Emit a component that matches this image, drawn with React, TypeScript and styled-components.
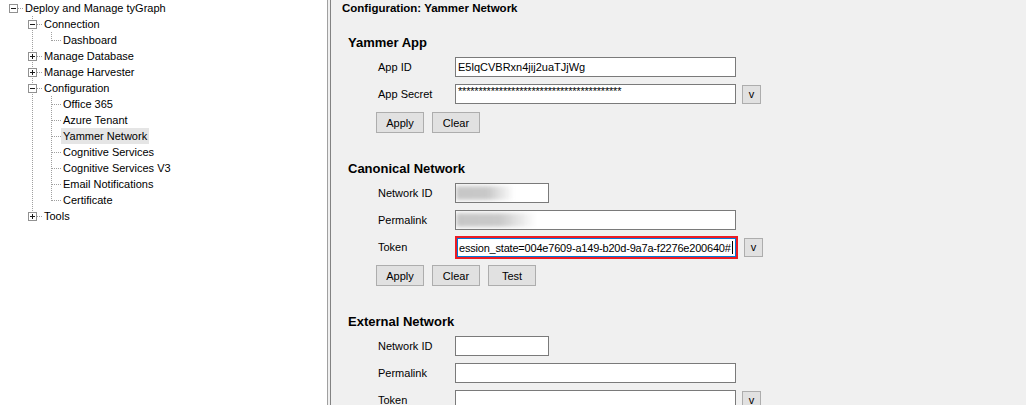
import React from 'react';
import styled, { createGlobalStyle } from 'styled-components';

const GlobalStyle = createGlobalStyle`
  html, body { margin: 0; padding: 0; overflow: hidden; background: #f0f0f0; }
  body { font-family: "Liberation Sans", Arial, sans-serif; font-size: 11px; color: #000; }
  * { box-sizing: border-box; }
`;

const Window = styled.div`
  display: flex;
  width: 1026px;
  height: 405px;
  overflow: hidden;
`;

const TreePanel = styled.div`
  width: 327px;
  flex: none;
  background: #fff;
  display: flex;
  flex-direction: column;
`;

const Splitter = styled.div`
  width: 4px;
  flex: none;
  background: #f0f0f0;
  border-left: 1px solid #a0a0a0;
  border-right: 1px solid #828282;
`;

const Content = styled.div`
  flex: 1;
  background: #f0f0f0;
  padding-left: 11px;
  display: flex;
  flex-direction: column;
`;

const TreeRowBox = styled.div`
  display: flex;
  align-items: center;
  height: 16px;
  white-space: nowrap;
`;

const NodeLabel = styled.span<{ $selected?: boolean }>`
  padding: 0 2px;
  line-height: 16px;
  font-size: 11px;
  background: ${p => (p.$selected ? '#e5e5e5' : 'transparent')};
`;

const Title = styled.div`
  font-weight: bold;
  font-size: 11.5px;
  line-height: 16px;
`;

const GroupBox = styled.section<{ $top: number }>`
  margin-top: ${p => p.$top}px;
  padding-left: 6px;
  display: flex;
  flex-direction: column;
`;

const GroupHeading = styled.div`
  font-weight: bold;
  font-size: 13px;
  line-height: 16px;
`;

const Fields = styled.div`
  display: flex;
  flex-direction: column;
  gap: 7px;
  margin-top: 6px;
  padding-left: 30px;
`;

const FieldRow = styled.div`
  display: flex;
  align-items: center;
  height: 20px;
`;

const FieldLabel = styled.div`
  width: 77px;
  flex: none;
  font-size: 11px;
`;

const TextBox = styled.div<{ $width: number }>`
  width: ${p => p.$width}px;
  height: 20px;
  flex: none;
  background: #fff;
  border: 1px solid #7a7a7a;
  padding: 0 2px;
  display: flex;
  align-items: center;
  font-size: 11px;
  overflow: hidden;
  white-space: nowrap;
`;

const Masked = styled.span`
  font-size: 11px;
  letter-spacing: -0.2px;
  position: relative;
  top: -3px;
`;

const Blur = styled.span<{ $width: number }>`
  display: block;
  width: ${p => p.$width}px;
  height: 14px;
  margin-left: -2px;
  background: linear-gradient(to right, #c6c6c6 0%, #c9c9c9 55%, rgba(255, 255, 255, 0) 100%);
  filter: blur(2px);
`;

const FocusFrame = styled.div`
  width: 283px;
  height: 23px;
  flex: none;
  margin: -1px 0 -2px 0;
  border: 2px solid #ec1c24;
  display: flex;
`;

const FocusedBox = styled.div`
  flex: 1;
  background: #fff;
  border: 1px solid #0078d7;
  display: flex;
  align-items: center;
  justify-content: flex-end;
  padding: 0 3px 0 1px;
  overflow: hidden;
  white-space: nowrap;
  font-size: 11px;
  letter-spacing: -0.2px;
`;

const Caret = styled.span`
  display: inline-block;
  width: 1px;
  height: 13px;
  background: #000;
  margin-left: 1px;
`;

const DropButton = styled.div`
  width: 19px;
  height: 19px;
  flex: none;
  margin-left: 6px;
  background: #e1e1e1;
  border: 1px solid #adadad;
  display: flex;
  align-items: center;
  justify-content: center;
  font-size: 11px;
  padding-bottom: 1px;
`;

const ButtonRow = styled.div`
  display: flex;
  gap: 8px;
  margin-top: 8px;
  padding-left: 28px;
`;

const Button = styled.div`
  width: 48px;
  height: 21px;
  background: #e1e1e1;
  border: 1px solid #adadad;
  display: flex;
  align-items: center;
  justify-content: center;
  font-size: 11px;
`;

type Kind = 'minus' | 'plus' | 'leaf';
interface Node {
  label: string;
  depth: number;
  kind: Kind;
  last: boolean;
  guides: number[];
  selected?: boolean;
}

const tree: Node[] = [
  { label: 'Deploy and Manage tyGraph', depth: 0, kind: 'minus', last: true, guides: [] },
  { label: 'Connection', depth: 1, kind: 'minus', last: false, guides: [] },
  { label: 'Dashboard', depth: 2, kind: 'leaf', last: true, guides: [1] },
  { label: 'Manage Database', depth: 1, kind: 'plus', last: false, guides: [] },
  { label: 'Manage Harvester', depth: 1, kind: 'plus', last: false, guides: [] },
  { label: 'Configuration', depth: 1, kind: 'minus', last: false, guides: [] },
  { label: 'Office 365', depth: 2, kind: 'leaf', last: false, guides: [1] },
  { label: 'Azure Tenant', depth: 2, kind: 'leaf', last: false, guides: [1] },
  { label: 'Yammer Network', depth: 2, kind: 'leaf', last: false, guides: [1], selected: true },
  { label: 'Cognitive Services', depth: 2, kind: 'leaf', last: false, guides: [1] },
  { label: 'Cognitive Services V3', depth: 2, kind: 'leaf', last: false, guides: [1] },
  { label: 'Email Notifications', depth: 2, kind: 'leaf', last: false, guides: [1] },
  { label: 'Certificate', depth: 2, kind: 'leaf', last: true, guides: [1] },
  { label: 'Tools', depth: 1, kind: 'plus', last: true, guides: [] },
];

const center = (d: number) => 13 + 19 * d;
const DOT = { stroke: '#a0a0a0', strokeWidth: 1, strokeDasharray: '1 1' };

function Connector({ node }: { node: Node }) {
  const c = center(node.depth);
  const w = c + 10;
  const cx = c + 0.5;
  return (
    <svg width={w} height={16} style={{ flex: 'none', display: 'block' }} shapeRendering="crispEdges">
      {node.guides.map(g => (
        <line key={g} x1={center(g) + 0.5} y1={0} x2={center(g) + 0.5} y2={16} {...DOT} />
      ))}
      {node.depth > 0 && <line x1={cx} y1={0} x2={cx} y2={node.last ? 9 : 16} {...DOT} />}
      <line x1={node.kind === 'leaf' ? c + 1 : c + 5} y1={8.5} x2={c + 10} y2={8.5} {...DOT} />
      {node.kind !== 'leaf' && (
        <g>
          <rect x={c - 4 + 0.5} y={4.5} width={8} height={8} fill="#fff" stroke="#919191" />
          <line x1={c - 2} y1={8.5} x2={c + 3} y2={8.5} stroke="#1a1a1a" />
          {node.kind === 'plus' && <line x1={cx} y1={6} x2={cx} y2={11} stroke="#1a1a1a" />}
        </g>
      )}
    </svg>
  );
}

function TreeRow({ node }: { node: Node }) {
  return (
    <TreeRowBox>
      <Connector node={node} />
      <NodeLabel $selected={node.selected}>{node.label}</NodeLabel>
    </TreeRowBox>
  );
}

function Buttons({ labels }: { labels: string[] }) {
  return (
    <ButtonRow>
      {labels.map(l => (
        <Button key={l}>{l}</Button>
      ))}
    </ButtonRow>
  );
}

export default function App() {
  return (
    <>
      <GlobalStyle />
      <Window>
        <TreePanel>
          {tree.map(n => (
            <TreeRow key={n.label} node={n} />
          ))}
        </TreePanel>
        <Splitter />
        <Content>
          <Title>Configuration: Yammer Network</Title>

          <GroupBox $top={19}>
            <GroupHeading>Yammer App</GroupHeading>
            <Fields>
              <FieldRow>
                <FieldLabel>App ID</FieldLabel>
                <TextBox $width={281}>E5lqCVBRxn4jij2uaTJjWg</TextBox>
              </FieldRow>
              <FieldRow>
                <FieldLabel>App Secret</FieldLabel>
                <TextBox $width={281}>
                  <Masked>{'*'.repeat(40)}</Masked>
                </TextBox>
                <DropButton>v</DropButton>
              </FieldRow>
            </Fields>
            <Buttons labels={['Apply', 'Clear']} />
          </GroupBox>

          <GroupBox $top={28}>
            <GroupHeading>Canonical Network</GroupHeading>
            <Fields>
              <FieldRow>
                <FieldLabel>Network ID</FieldLabel>
                <TextBox $width={94}>
                  <Blur $width={58} />
                </TextBox>
              </FieldRow>
              <FieldRow>
                <FieldLabel>Permalink</FieldLabel>
                <TextBox $width={281}>
                  <Blur $width={80} />
                </TextBox>
              </FieldRow>
              <FieldRow>
                <FieldLabel>Token</FieldLabel>
                <FocusFrame>
                  <FocusedBox>
                    ession_state=004e7609-a149-b20d-9a7a-f2276e200640#
                    <Caret />
                  </FocusedBox>
                </FocusFrame>
                <DropButton>v</DropButton>
              </FieldRow>
            </Fields>
            <Buttons labels={['Apply', 'Clear', 'Test']} />
          </GroupBox>

          <GroupBox $top={28}>
            <GroupHeading>External Network</GroupHeading>
            <Fields>
              <FieldRow>
                <FieldLabel>Network ID</FieldLabel>
                <TextBox $width={94} />
              </FieldRow>
              <FieldRow>
                <FieldLabel>Permalink</FieldLabel>
                <TextBox $width={281} />
              </FieldRow>
              <FieldRow>
                <FieldLabel>Token</FieldLabel>
                <TextBox $width={281} />
                <DropButton>v</DropButton>
              </FieldRow>
            </Fields>
          </GroupBox>
        </Content>
      </Window>
    </>
  );
}
